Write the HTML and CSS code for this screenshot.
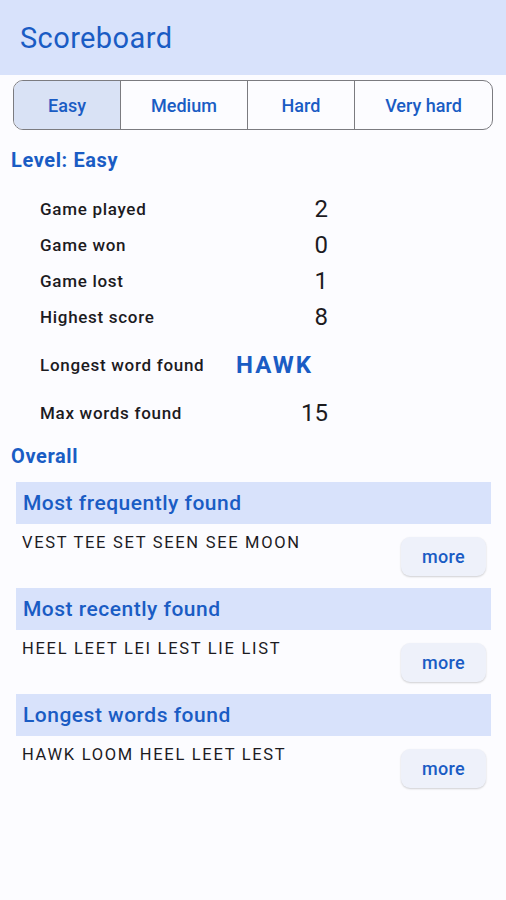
FILE: index.html
```html
<!DOCTYPE html>
<html>
<head>
<meta charset="utf-8">
<link rel="stylesheet" href="styles.css">
</head>
<body>
<header class="appbar">Scoreboard</header>
<nav class="segments">
  <div class="seg selected">Easy</div>
  <div class="seg">Medium</div>
  <div class="seg">Hard</div>
  <div class="seg">Very hard</div>
</nav>
<h2 class="heading level">Level: Easy</h2>
<div class="stats">
  <div class="row"><span class="label">Game played</span><span class="value">2</span></div>
  <div class="row"><span class="label">Game won</span><span class="value">0</span></div>
  <div class="row"><span class="label">Game lost</span><span class="value">1</span></div>
  <div class="row"><span class="label">Highest score</span><span class="value">8</span></div>
  <div class="row wide"><span class="label">Longest word found</span><span class="value word">HAWK</span></div>
  <div class="row"><span class="label">Max words found</span><span class="value">15</span></div>
</div>
<h2 class="heading overall">Overall</h2>
<section class="section">
  <div class="section-title">Most frequently found</div>
  <div class="section-body">
    <div class="words">VEST TEE SET SEEN SEE MOON</div>
    <button class="more">more</button>
  </div>
</section>
<section class="section">
  <div class="section-title">Most recently found</div>
  <div class="section-body">
    <div class="words">HEEL LEET LEI LEST LIE LIST</div>
    <button class="more">more</button>
  </div>
</section>
<section class="section">
  <div class="section-title">Longest words found</div>
  <div class="section-body">
    <div class="words">HAWK LOOM HEEL LEET LEST</div>
    <button class="more">more</button>
  </div>
</section>
</body>
</html>
```
FILE: styles.css
```css
* { box-sizing: border-box; }
html, body {
  margin: 0;
  padding: 0;
  background: #fcfcff;
  font-family: Roboto, "Noto Sans", sans-serif;
  color: #1c1b1f;
}
.appbar {
  height: 75px;
  background: #d8e2fb;
  color: #1a5cc4;
  font-size: 29px;
  letter-spacing: 0.4px;
  display: flex;
  align-items: center;
  padding-left: 20px;
}
.segments {
  margin: 5px 13px 0;
  height: 50px;
  border: 1px solid #7b7b80;
  border-radius: 10px;
  overflow: hidden;
  display: grid;
  grid-template-columns: 106fr 127fr 107fr 138fr;
}
.seg {
  display: flex;
  align-items: center;
  justify-content: center;
  font-size: 18px;
  font-weight: 500;
  color: #1a5cc4;
  border-left: 1px solid #7b7b80;
}
.seg:first-child { border-left: none; }
.seg.selected { background: #d9e2f5; }
.heading {
  margin: 0;
  padding-left: 11px;
  font-size: 20px;
  font-weight: 700;
  letter-spacing: 0.6px;
  line-height: 24px;
  color: #1a5cc4;
}
.level { margin-top: 18px; }
.stats {
  margin-top: 19px;
  padding-left: 40px;
}
.row {
  display: grid;
  grid-template-columns: 196px 92px;
  align-items: center;
  height: 36px;
}
.row.wide { margin: 12px 0; }
.label {
  font-size: 17px;
  font-weight: 500;
  letter-spacing: 0.7px;
  color: #1c1b1f;
}
.value {
  font-size: 24px;
  text-align: right;
  color: #1c1b1f;
}
.value.word {
  text-align: left;
  font-size: 24px;
  font-weight: 700;
  color: #1a5cc4;
  letter-spacing: 2px;
}
.overall { margin-top: 13px; }
.section {
  margin: 0 15px 0 16px;
}
.overall + .section { margin-top: 14px; }
.section-title {
  height: 42px;
  background: #d8e2fb;
  color: #1a5cc4;
  font-size: 21px;
  font-weight: 500;
  letter-spacing: 0.5px;
  display: flex;
  align-items: center;
  padding-left: 7px;
}
.section-body {
  height: 64px;
  display: flex;
  justify-content: space-between;
  align-items: flex-start;
  padding: 0 5px 0 6px;
}
.words {
  padding-top: 7px;
  font-size: 16.5px;
  line-height: 24px;
  letter-spacing: 1.7px;
  color: #1c1b1f;
}
.more {
  margin-top: 13px;
  width: 85px;
  height: 39px;
  border: none;
  border-radius: 9px;
  background: #eef1fa;
  box-shadow: 0 1px 2px rgba(0,0,0,0.18);
  font-family: Roboto, sans-serif;
  font-size: 18px;
  font-weight: 500;
  letter-spacing: 0.3px;
  color: #1a5cc4;
  padding: 0;
}
```
